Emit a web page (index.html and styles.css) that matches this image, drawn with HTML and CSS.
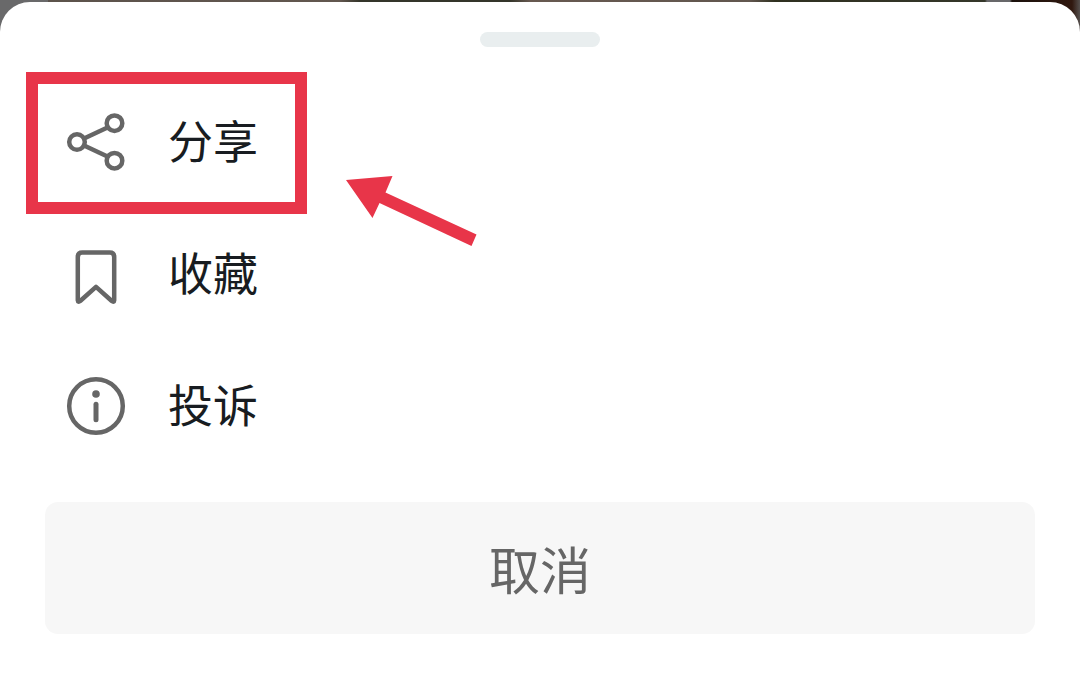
FILE: index.html
```html
<!DOCTYPE html>
<html lang="zh-CN">
<head>
  <meta charset="UTF-8" />
  <meta name="viewport" content="width=device-width, initial-scale=1" />
  <title>分享</title>
  <link rel="stylesheet" href="styles.css">
</head>
<body>
  <div class="sheet">
    <div class="handle"></div>

    <ul class="menu">
      <li class="item">
        <svg class="icon" viewBox="0 0 60 60">
          <path d="M18 26.5L41.5 15.5M18 33.5L41.5 44.5" />
          <circle cx="11" cy="30" r="7.8" />
          <circle cx="48.5" cy="11.2" r="7.8" />
          <circle cx="48.5" cy="48.7" r="7.8" />
        </svg>
        <span>分享</span>
        <div class="highlight"></div>
        <svg class="arrow" viewBox="0 0 132 72">
          <path d="M1 5L47.5 1L40.5 17.5L131.5 59.5L126.5 71L34.5 28L27.5 43Z" />
        </svg>
      </li>
      <li class="item">
        <svg class="icon" viewBox="0 0 60 60">
          <path d="M16.3 8.4H43.7Q48.2 8.4 48.2 12.9V56.2Q48 58.6 45.8 57L30 42.8L14.2 57Q12 58.6 11.8 56.2V12.9Q11.8 8.4 16.3 8.4Z" />
        </svg>
        <span>收藏</span>
      </li>
      <li class="item">
        <svg class="icon" viewBox="0 0 60 60">
          <circle cx="30" cy="30" r="26.8" />
          <circle class="dot" cx="30" cy="18" r="3.8" />
          <path class="stem" d="M30 28.3V43.7" />
        </svg>
        <span>投诉</span>
      </li>
    </ul>

    <button class="cancel">取消</button>
  </div>
</body>
</html>
```

FILE: styles.css
```css
* {
  box-sizing: border-box;
}
body {
  margin: 0;
  height: 694px;
  padding-top: 2px;
  overflow: hidden;
  font-family: "Noto Sans CJK SC", sans-serif;
  background: linear-gradient(90deg, #69696a 48px, #5c534b 48px, #62574f 340px, #34352a 360px, #34352a 510px, #675950 530px, #62574f 750px, #2f3020 775px, #35372a 985px, #68686a 987px, #68686a 1010px, #1b110c 1012px, #30180f 1072px, #55504e 1080px);
}
.sheet {
  height: 692px;
  padding: 30px 45px 0;
  background: #fff;
  border-radius: 30px 30px 0 0;
}
.handle {
  width: 120px;
  height: 15px;
  margin: 0 auto;
  background: #e9eeef;
  border-radius: 8px;
}
.menu {
  list-style: none;
  margin: 29px 0 30px;
  padding: 0;
}
.item {
  position: relative;
  display: flex;
  align-items: center;
  gap: 42px;
  height: 132px;
  padding-left: 21px;
  font-size: 45px;
  line-height: 60px;
  color: #181c21;
}
.item span {
  padding-bottom: 4px;
}
.icon {
  width: 60px;
  height: 60px;
  fill: none;
  stroke: #666;
  stroke-width: 4.5;
  stroke-linecap: round;
  stroke-linejoin: round;
}
.icon .dot {
  fill: #666;
  stroke: none;
}
.icon .stem {
  stroke-width: 5;
}
/* red frame and arrow over the share row */
.highlight {
  position: absolute;
  left: -19px;
  top: -4px;
  width: 281px;
  height: 142px;
  border: 12.5px solid #e83549;
}
.arrow {
  position: absolute;
  left: 300px;
  top: 99px;
  width: 132px;
  height: 72px;
  fill: #e83549;
}
.cancel {
  display: block;
  width: 100%;
  height: 132px;
  padding: 0;
  border: none;
  border-radius: 13px;
  background: #f7f7f7;
  color: #666;
  font-family: inherit;
  font-size: 51px;
}
```
